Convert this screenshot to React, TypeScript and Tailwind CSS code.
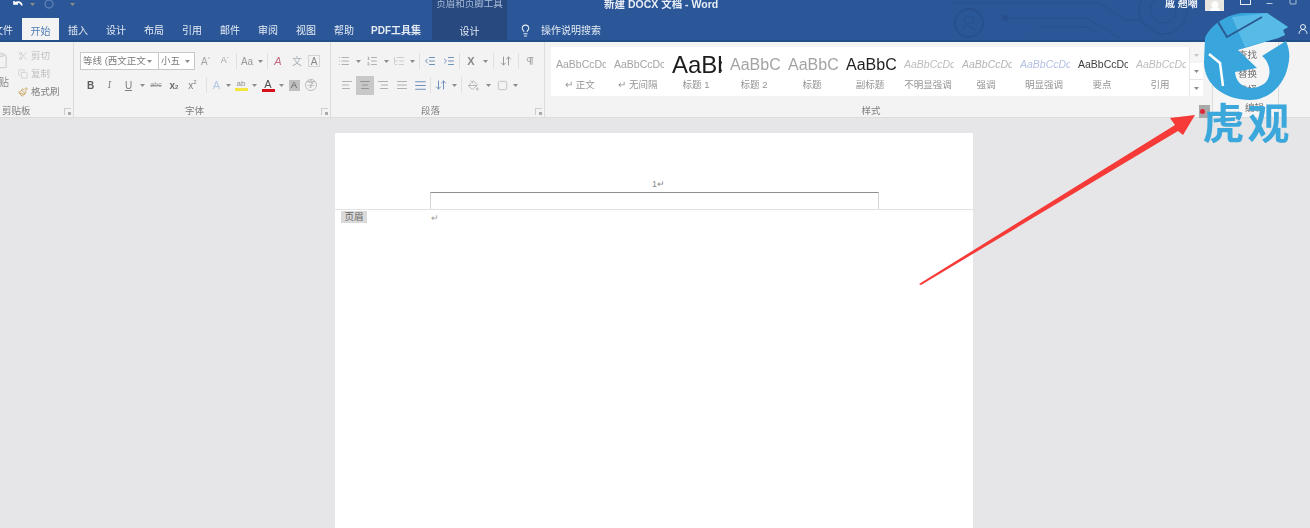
import { ReactNode } from "react";
import {
  AlignCenter,
  AlignJustify,
  AlignLeft,
  AlignRight,
  ArrowDownUp,
  Clipboard,
  Copy,
  IndentDecrease,
  IndentIncrease,
  Lightbulb,
  List,
  ListOrdered,
  ListTree,
  Minus,
  Paintbrush,
  PaintBucket,
  Pilcrow,
  Scissors,
  Square,
  UserRound,
} from "lucide-react";

/* ================= SMALL PARTS ================= */

function Cell({ className = "", children }: { className?: string; children?: ReactNode }) {
  return <div className={`flex items-center justify-center shrink-0 h-[18px] ${className}`}>{children}</div>;
}

function Caret({ className = "" }: { className?: string }) {
  return (
    <Cell className={className}>
      <svg width="5" height="3" viewBox="0 0 5 3">
        <path d="M0 0h5L2.5 3z" fill="#8c8c8c" />
      </svg>
    </Cell>
  );
}

function Sep({ className = "" }: { className?: string }) {
  return <div className={`w-px h-[16px] bg-[#e0e0e0] shrink-0 ${className}`} />;
}

function Launcher({ className = "" }: { className?: string }) {
  return (
    <div className={`absolute top-[66px] w-[7px] h-[7px] border-l border-t border-[#cccccc] ${className}`}>
      <div className="absolute right-0 bottom-0 w-[3px] h-[3px] bg-[#ababab]" />
    </div>
  );
}

function Tab({ label, className = "" }: { label: string; className?: string }) {
  return (
    <div className={`flex items-center justify-center shrink-0 pt-[2px] text-[10px] text-[#e4eaf4] ${className}`}>{label}</div>
  );
}

const tabs = ["插入", "设计", "布局", "引用", "邮件", "审阅", "视图", "帮助"];

const styles = [
  { label: "↵ 正文", preview: "AaBbCcDc", cls: "text-[10.5px] text-[#a3a3a3]" },
  { label: "↵ 无间隔", preview: "AaBbCcDc", cls: "text-[10.5px] text-[#a3a3a3]" },
  { label: "标题 1", preview: "AaBbC", cls: "text-[24px] text-[#1c1c1c]" },
  { label: "标题 2", preview: "AaBbC", cls: "text-[16px] text-[#a3a3a3]" },
  { label: "标题", preview: "AaBbC", cls: "text-[16px] text-[#a3a3a3]" },
  { label: "副标题", preview: "AaBbC", cls: "text-[16px] text-[#1f1f1f]" },
  { label: "不明显强调", preview: "AaBbCcDc", cls: "text-[10.5px] italic text-[#bcbcbc]" },
  { label: "强调", preview: "AaBbCcDc", cls: "text-[10.5px] italic text-[#b4b4b4]" },
  { label: "明显强调", preview: "AaBbCcDc", cls: "text-[10.5px] italic text-[#b4c0e4]" },
  { label: "要点", preview: "AaBbCcDc", cls: "text-[10.5px] text-[#3f3f3f]" },
  { label: "引用", preview: "AaBbCcDc", cls: "text-[10.5px] italic text-[#bcbcbc]" },
];

/* ================= TITLE + TABS ================= */

function TitleBar() {
  return (
    <div className="relative h-[42px] shrink-0 bg-[#2b5798] border-b-2 border-[#1f5088] flex flex-col overflow-hidden">
      {/* circuit pattern behind the title bar */}
      <svg className="absolute left-[940px] top-0" width="370" height="42" viewBox="940 0 370 42" fill="none" stroke="#284f8e" strokeWidth="1">
        <circle cx="969" cy="23" r="14" strokeWidth="2" />
        <path d="M964 30l1-13 9 0-1 6-7 1 9 6" />
        <circle cx="1005" cy="18" r="3" fill="#284f8e" />
        <path d="M1005 18h82l33 20" />
        <path d="M950 3h150l25 17h15l25 18" />
        <path d="M1040 27h47l10 6M1040 27l-11 11" />
        <circle cx="1163" cy="10" r="24" />
        <circle cx="1163" cy="10" r="13" />
      </svg>

      <div className="relative h-[18px] shrink-0 flex items-start">
        <div className="flex items-center w-[432px] h-[8px] pl-[12px] text-[#dfe7f3]">
          <svg width="12" height="10" viewBox="0 0 12 10" fill="none" stroke="#fff" strokeWidth="1.6">
            <path d="M2 2v3h4M2.5 5C4 2.5 9 2 10 6.5" />
          </svg>
          <Caret className="w-[12px] !h-[8px] ml-[2px]" />
          <svg className="ml-[6px]" width="10" height="10" viewBox="0 0 10 10" fill="none" stroke="#5c7fb4" strokeWidth="1.4">
            <circle cx="5" cy="5" r="4" />
          </svg>
          <Caret className="w-[8px] !h-[8px] ml-[14px]" />
        </div>
        <div className="w-[75px] h-[18px] bg-[#27497f] text-[9.5px] leading-[8px] text-[#a9bcd8] text-center">页眉和页脚工具</div>
        <div className="w-[97px]" />
        <div className="text-[10.5px] leading-[8px] text-[#e9eef6] w-[561px] font-semibold">新建 DOCX 文档 - Word</div>
        <div className="text-[10px] leading-[8px] font-semibold text-[#f0f3f8] w-[40px]">戚 翘嘲</div>
        <div className="w-[19px] h-[11px] bg-[#e9e6e2] flex justify-center overflow-hidden">
          <UserRound size={14} className="text-white fill-white" />
        </div>
        <div className="ml-[16px] w-[11px] h-[5px] border-x border-b border-[#e8eef6]" />
        <Minus size={9} className="ml-[14px] -mt-[1px] text-[#e8eef6]" />
        <Square size={8} className="ml-[15px] -mt-[3px] text-[#e8eef6]" />
      </div>

      <div className="relative h-[22px] flex items-stretch">
        <Tab label="文件" className="w-[38px] -ml-[16px]" />
        <Tab label="开始" className="w-[37px] !text-[#4f7db5] bg-[#f3f3f3] -mb-[2px]" />
        {tabs.map((t) => (
          <Tab key={t} label={t} className="w-[38px]" />
        ))}
        <Tab label="PDF工具集" className="w-[58px] ml-[4px] font-semibold" />
        <Tab label="设计" className="w-[75px] ml-[7px] bg-[#27497f] -mb-[2px]" />
        <div className="flex items-center pt-[2px] ml-[12px] gap-[9px] text-[10px] text-[#e4eaf4]">
          <Lightbulb size={13} />
          <span>操作说明搜索</span>
        </div>
        <div className="flex-1" />
        <UserRound size={12} className="self-center mr-[1px] text-[#e8eef6]" />
      </div>
    </div>
  );
}

/* ================= RIBBON GROUPS ================= */

function ClipboardGroup() {
  return (
    <div className="relative w-[74px] shrink-0 border-r border-[#dcdcdc] overflow-hidden">
      <div className="h-[61px] flex">
        <div className="w-[18px] shrink-0 -ml-[9px] pt-[10px] flex flex-col items-end text-[10px] text-[#8b8b8b]">
          <Clipboard size={17} className="text-[#d4d4d4]" />
          <span className="mt-[6px]">贴</span>
        </div>
        <div className="pl-[9px] pt-[7px] flex flex-col text-[9.5px] text-[#c0c0c0] gap-[4px]">
          <div className="flex items-center h-[14px] gap-[3px]">
            <Scissors size={10} className="text-[#cccccc]" />
            <span>剪切</span>
          </div>
          <div className="flex items-center h-[14px] gap-[3px]">
            <Copy size={10} className="text-[#cccccc]" />
            <span>复制</span>
          </div>
          <div className="flex items-center h-[14px] gap-[3px] text-[#808080]">
            <Paintbrush size={10} className="text-[#c49a4a]" />
            <span>格式刷</span>
          </div>
        </div>
      </div>
      <div className="pl-[2px] text-[9.5px] leading-[15px] text-[#808080]">剪贴板</div>
      <Launcher className="left-[64px]" />
    </div>
  );
}

function FontGroup() {
  return (
    <div className="relative w-[257px] shrink-0 border-r border-[#dcdcdc]">
      <div className="h-[61px] pl-[6px] pt-[10px] flex flex-col gap-[6px] text-[#6f6f6f]">
        <div className="flex items-center h-[18px]">
          <div className="w-[79px] h-[18px] bg-white border border-[#c8c8c8] flex items-center pl-[2px] text-[9.5px] text-[#7a7a7a] whitespace-nowrap overflow-hidden">
            等线 (西文正文
            <Caret className="w-[8px]" />
          </div>
          <div className="w-[37px] h-[18px] -ml-px bg-white border border-[#c8c8c8] flex items-center pl-[2px] text-[9.5px] text-[#7a7a7a]">
            小五
            <Caret className="w-[12px] ml-[1px]" />
          </div>
          <Cell className="w-[19px] ml-[1px] text-[10px] text-[#a5a5a5]">A<sup className="text-[5px]">^</sup></Cell>
          <Cell className="w-[19px] text-[9px] text-[#a5a5a5]">A<sup className="text-[5px]">ˇ</sup></Cell>
          <Sep className="ml-[2px]" />
          <Cell className="w-[20px] text-[10px] text-[#999999]">Aa</Cell>
          <Caret className="w-[6px]" />
          <Sep className="ml-[4px]" />
          <Cell className="w-[20px] text-[11px] text-[#c86a82] italic">A</Cell>
          <Cell className="w-[18px] text-[10px] text-[#a8b2b5]">文</Cell>
          <Cell className="w-[12px] !h-[12px] ml-[2px] border border-[#d4d4d4] text-[10px] text-[#868686]">A</Cell>
        </div>
        <div className="flex items-center h-[18px] pl-[1px]">
          <Cell className="w-[19px] text-[10px] font-bold text-[#5e5e5e]">B</Cell>
          <Cell className="w-[19px] text-[10px] italic font-serif text-[#808080]">I</Cell>
          <Cell className="w-[19px] text-[10px] underline text-[#808080]">U</Cell>
          <Caret className="w-[9px]" />
          <Cell className="w-[18px] text-[7px] line-through text-[#999999]">abc</Cell>
          <Cell className="w-[18px] text-[10px] font-semibold text-[#6e6e6e]">x<sub className="text-[6px]">2</sub></Cell>
          <Cell className="w-[19px] text-[10px] text-[#808080]">x<sup className="text-[6px]">2</sup></Cell>
          <Sep className="ml-[4px]" />
          <Cell className="w-[19px] text-[11px] text-[#b4c6e6]">A</Cell>
          <Caret className="w-[5px]" />
          <Cell className="w-[20px]">
            <div className="flex flex-col items-center">
              <span className="text-[8px] leading-[9px] text-[#8f8f8f]">ab</span>
              <span className="w-[13px] h-[3px] bg-[#f4e640]" />
            </div>
          </Cell>
          <Caret className="w-[7px]" />
          <Cell className="w-[20px]">
            <div className="flex flex-col items-center">
              <span className="text-[11px] leading-[10px] text-[#505050]">A</span>
              <span className="w-[13px] h-[3px] bg-[#d5101c]" />
            </div>
          </Cell>
          <Caret className="w-[6px]" />
          <Cell className="w-[20px]">
            <span className="w-[11px] h-[11px] bg-[#c0c0c0] text-[9px] leading-[11px] text-center text-[#5e5e5e]">A</span>
          </Cell>
          <Cell className="w-[12px] !h-[12px] ml-[1px] rounded-full border border-[#bcbcbc] text-[8px] text-[#a0a0a0]">字</Cell>
        </div>
      </div>
      <div className="pr-[15px] text-center text-[9.5px] leading-[15px] text-[#808080]">字体</div>
      <Launcher className="left-[247px]" />
    </div>
  );
}

function ParagraphGroup() {
  const ic = "text-[#b0b0b0]";
  return (
    <div className="relative w-[214px] shrink-0 border-r border-[#dcdcdc]">
      <div className="h-[61px] pl-[6px] pt-[10px] flex flex-col gap-[6px]">
        <div className="flex items-center h-[18px]">
          <Cell className="w-[14px]"><List size={12} className={ic} /></Cell>
          <Caret className="w-[14px]" />
          <Cell className="w-[14px]"><ListOrdered size={12} className={ic} /></Cell>
          <Caret className="w-[14px]" />
          <Cell className="w-[12px]"><ListTree size={12} className="text-[#cccccc]" /></Cell>
          <Caret className="w-[14px]" />
          <Sep />
          <Cell className="w-[20px]"><IndentDecrease size={12} className="text-[#7090bc]" /></Cell>
          <Cell className="w-[18px]"><IndentIncrease size={12} className="text-[#7090bc]" /></Cell>
          <Sep className="ml-[1px]" />
          <Cell className="w-[22px] text-[11px] font-bold text-[#888888]">X</Cell>
          <Caret className="w-[6px]" />
          <Sep className="ml-[5px]" />
          <Cell className="w-[24px]"><ArrowDownUp size={12} className="text-[#999999]" /></Cell>
          <Sep />
          <Cell className="w-[22px]"><Pilcrow size={10} className="text-[#999999]" /></Cell>
        </div>
        <div className="flex items-center h-[18px]">
          <Cell className="w-[19px]"><AlignLeft size={12} className={ic} /></Cell>
          <Cell className="w-[18px] !h-[19px] bg-[#c8c8c8]"><AlignCenter size={12} className="text-[#959595]" /></Cell>
          <Cell className="w-[18px]"><AlignRight size={12} className={ic} /></Cell>
          <Cell className="w-[19px]"><AlignJustify size={12} className={ic} /></Cell>
          <Cell className="w-[19px]"><AlignJustify size={13} className="text-[#7090bc]" /></Cell>
          <Sep />
          <Cell className="w-[20px]"><ArrowDownUp size={12} className="text-[#7090bc]" /></Cell>
          <Caret className="w-[6px]" />
          <Sep className="ml-[4px]" />
          <Cell className="w-[21px] ml-[1px]"><PaintBucket size={11} className={ic} /></Cell>
          <Caret className="w-[8px]" />
          <Cell className="w-[18px] ml-[1px]"><Square size={11} strokeDasharray="2 1" className="text-[#c4c4c4]" /></Cell>
          <Caret className="w-[8px]" />
        </div>
      </div>
      <div className="pr-[14px] text-center text-[9.5px] leading-[15px] text-[#808080]">段落</div>
      <Launcher className="left-[204px]" />
    </div>
  );
}

function StylesGroup() {
  return (
    <div className="relative w-[667px] shrink-0">
      <div className="h-[61px] pl-[6px] pt-[5px]">
        <div className="flex h-[49px] w-[652px] bg-white">
          {styles.map((s, i) => (
            <div key={i} className="w-[58px] shrink-0 flex flex-col items-center overflow-hidden">
              <div className="h-[31px] w-[58px] pl-[5px] pt-[5px] flex items-center">
                <div className={`w-[50px] overflow-hidden whitespace-nowrap ${s.cls}`}>{s.preview}</div>
              </div>
              <div className="text-[9.5px] leading-[13px] text-[#949494]">{s.label}</div>
            </div>
          ))}
          <div className="flex-1 flex flex-col border-l border-[#e6e6e6]">
            <Caret className="flex-1 bg-[#ececec] opacity-50" />
            <Caret className="flex-1 border-b border-[#e6e6e6]" />
            <Caret className="flex-1" />
          </div>
        </div>
      </div>
      <div className="pr-[15px] text-center text-[9.5px] leading-[15px] text-[#808080]">样式</div>
      {/* highlighted launcher with the red pointer dot */}
      <div className="absolute left-[654px] top-[63px] w-[11px] h-[13px] bg-[#a9a9a9] flex items-center justify-start pl-[1px]">
        <div className="w-[5px] h-[5px] rounded-full bg-[#e0263a]" />
      </div>
    </div>
  );
}

function EditGroup() {
  return (
    <div className="w-[67px] shrink-0 bg-[#f5f5f5] border-x border-[#dcdcdc] flex flex-col items-center pt-[6px] gap-[5px] text-[9.5px] leading-[14px] text-[#6f6f6f]">
      <span className="pl-[4px]">查找</span>
      <span className="pl-[4px]">替换</span>
      <span className="pl-[4px] -mt-[3px]">选择</span>
      <span className="pl-[18px] -mt-[1px]">编辑</span>
    </div>
  );
}

/* ================= OVERLAYS ================= */

function Arrow() {
  return (
    <svg className="absolute left-[915px] top-[110px]" width="285" height="180" viewBox="915 110 285 180">
      <polygon points="919,284 1175,125 1170,118 1195,115 1183,135 1178,131 921,285" fill="#f63a38" />
    </svg>
  );
}

function Logo() {
  return (
    <div className="absolute left-[1200px] top-[8px] w-[100px] flex flex-col items-center blur-[0.4px]">
      <svg width="100" height="96" viewBox="1200 8 100 96">
        <path
          d="M1205 38C1210 26 1225 15 1242 13L1267 13L1288 27L1283 30L1285 35L1278 38L1238 50L1257 68L1235 72C1236 86 1250 92 1262 85C1272 80 1272 64 1262 56L1286 41C1290 50 1290 58 1288 66C1284 86 1268 100 1250 100C1226 100 1204 86 1204 62Z"
          fill="#38a6dc"
        />
        <path d="M1232 17L1267 13L1288 27L1283 30L1285 35L1278 38L1245 47Z" fill="#58bae6" />
        <path d="M1218 22L1227 37L1262 17" fill="none" stroke="#2c5a92" strokeWidth="2" />
        <path d="M1209 54L1220 63L1223 86" fill="none" stroke="#ffffff" strokeWidth="2.5" />
      </svg>
      <div className="-mt-[1px] -ml-[5px] text-[42px] leading-[44px] tracking-[3px] font-bold text-[#3ba7da] whitespace-nowrap">虎观</div>
    </div>
  );
}

/* ================= PAGE ================= */

export default function App() {
  return (
    <div className="relative h-[528px] w-[1310px] overflow-hidden flex flex-col bg-[#e6e6e8] font-['Liberation_Sans','Noto_Sans_CJK_SC',sans-serif]">
      <div className="blur-[0.4px]">
        <TitleBar />
      </div>

      <div className="flex h-[76px] shrink-0 bg-[#f3f3f3] border-b border-[#dddddd] blur-[0.4px]">
        <ClipboardGroup />
        <FontGroup />
        <ParagraphGroup />
        <StylesGroup />
        <EditGroup />
      </div>

      <div className="flex-1 pt-[15px] pl-[335px] min-h-0">
        <div className="w-[638px] h-full bg-white">
          <div className="h-[77px] pl-[95px] flex flex-col justify-end border-b border-[#e2e2e2]">
            <div className="w-[449px] pl-[8px] mb-[2px] text-center text-[9px] leading-[12px] text-[#8a8a8a]">1↵</div>
            <div className="w-[449px] h-[17px] border-x border-t border-x-[#d4d4d4] border-t-[#8f8f8f]" />
          </div>
          <div className="flex pl-[6px] pt-px">
            <div className="w-[26px] h-[12px] bg-[#dadada] text-[9.5px] leading-[12px] text-center text-[#666666]">页眉</div>
            <div className="ml-[64px] text-[9px] leading-[14px] text-[#9a9a9a]">↵</div>
          </div>
        </div>
      </div>

      <Arrow />
      <Logo />
    </div>
  );
}
